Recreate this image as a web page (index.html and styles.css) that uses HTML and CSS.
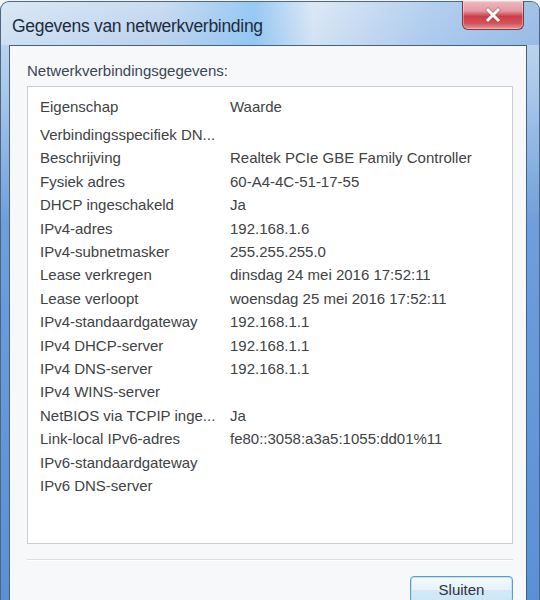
FILE: index.html
```html
<!DOCTYPE html>
<html lang="nl">
<head>
    <meta charset="UTF-8">
    <title>Gegevens van netwerkverbinding</title>
    <link rel="stylesheet" href="styles.css">
</head>
<body>
    <div class="window">
        <!-- Title bar -->
        <div class="titlebar">
            <span class="title">Gegevens van netwerkverbinding</span>
            <button class="close" aria-label="Sluiten">
                <svg width="18" height="16" viewBox="0 0 18 16">
                    <path d="M4 3 L14 13 M14 3 L4 13" stroke="#8a3038" stroke-width="4.2" stroke-linecap="square" opacity="0.45"/>
                    <path d="M4 3 L14 13 M14 3 L4 13" stroke="#fff" stroke-width="3" stroke-linecap="square"/>
                </svg>
            </button>
        </div>

        <div class="client">
            <p class="label">Netwerkverbindingsgegevens:</p>
            <div class="listbox">
                <div class="row header">
                    <span>Eigenschap</span>
                    <span>Waarde</span>
                </div>
                <div class="row"><span>Verbindingsspecifiek DN...</span><span></span></div>
                <div class="row"><span>Beschrijving</span><span>Realtek PCIe GBE Family Controller</span></div>
                <div class="row"><span>Fysiek adres</span><span>60-A4-4C-51-17-55</span></div>
                <div class="row"><span>DHCP ingeschakeld</span><span>Ja</span></div>
                <div class="row"><span>IPv4-adres</span><span>192.168.1.6</span></div>
                <div class="row"><span>IPv4-subnetmasker</span><span>255.255.255.0</span></div>
                <div class="row"><span>Lease verkregen</span><span>dinsdag 24 mei 2016 17:52:11</span></div>
                <div class="row"><span>Lease verloopt</span><span>woensdag 25 mei 2016 17:52:11</span></div>
                <div class="row"><span>IPv4-standaardgateway</span><span>192.168.1.1</span></div>
                <div class="row"><span>IPv4 DHCP-server</span><span>192.168.1.1</span></div>
                <div class="row"><span>IPv4 DNS-server</span><span>192.168.1.1</span></div>
                <div class="row"><span>IPv4 WINS-server</span><span></span></div>
                <div class="row"><span>NetBIOS via TCPIP inge...</span><span>Ja</span></div>
                <div class="row"><span>Link-local IPv6-adres</span><span>fe80::3058:a3a5:1055:dd01%11</span></div>
                <div class="row"><span>IPv6-standaardgateway</span><span></span></div>
                <div class="row"><span>IPv6 DNS-server</span><span></span></div>
            </div>
            <div class="separator"></div>
            <div class="buttons">
                <button class="btn">Sluiten</button>
            </div>
        </div>
    </div>
</body>
</html>
```

FILE: styles.css
```css
body {
    margin: 0;
    background: #f4f4f4;
    font-family: "Liberation Sans", Arial, sans-serif;
    overflow: hidden;
}
.window {
    box-sizing: border-box;
    width: 540px;
    height: 602px;
    margin-top: 1px;
    border: 1px solid #4f6580;
    border-bottom: none;
    border-radius: 9px 9px 0 0;
    background: linear-gradient(to bottom, #cadcf1 0, #a9c7ea 90px, #6e9fdc 220px, #5a90d6 600px);
    padding: 0 12px 0 8px;
    display: flex;
    flex-direction: column;
}
.titlebar {
    height: 45px;
    display: flex;
    justify-content: space-between;
    align-items: flex-start;
    margin: 0 -12px 0 -8px;
    padding: 0 15px 0 11px;
    border-radius: 9px 9px 0 0;
    background: linear-gradient(to right, rgba(255,255,255,0.3) 0, rgba(255,255,255,0) 30%, rgba(120,190,245,0.6) 47%, rgba(255,255,255,0.35) 58%, rgba(140,185,235,0.35) 80%, rgba(110,160,220,0.45) 100%);
}
.title {
    margin-top: 14px;
    font-size: 17.5px;
    letter-spacing: -0.3px;
    color: #1e2c3e;
}
.close {
    width: 62px;
    height: 29px;
    margin-top: -1px;
    border: 1px solid #7a3a44;
    border-top: none;
    border-radius: 0 0 6px 6px;
    background: linear-gradient(to bottom, #eeb9c0 0, #e49aa3 35%, #cc3d48 55%, #d6535c 80%, #e8959b 100%);
    display: flex;
    align-items: center;
    justify-content: center;
    padding: 0;
    box-shadow: inset 0 0 0 1px rgba(255,255,255,0.35);
}
.client {
    flex: 1;
    background: #f7f8f9;
    border: 1px solid #46607f;
    border-bottom: none;
    padding: 15px 13px 0 17px;
    display: flex;
    flex-direction: column;
}
.label {
    margin: 0;
    font-size: 15px;
    line-height: 20px;
    color: #3a4656;
}
.listbox {
    margin-top: 5px;
    height: 456px;
    background: #fff;
    border: 1px solid #c9ced4;
    color: #404244;
    font-size: 15px;
}
.row {
    display: grid;
    grid-template-columns: 190px 1fr;
    padding-left: 12px;
    line-height: 23.4px;
    white-space: nowrap;
}
.row.header {
    padding-top: 8px;
    padding-bottom: 4px;
    line-height: 24px;
}
.separator {
    margin-top: 15px;
    border-top: 1px solid #dcdfe2;
    border-bottom: 1px solid #fff;
}
.buttons {
    display: flex;
    justify-content: flex-end;
    padding-top: 15px;
}
.btn {
    width: 103px;
    height: 27px;
    border: 1px solid #5f9cc4;
    border-radius: 4px;
    background: linear-gradient(to bottom, #f4fafd 0, #e6f3fb 50%, #d3eaf8 51%, #cde6f6 100%);
    box-shadow: inset 0 0 0 1px #bfe4f7;
    font-family: "Liberation Sans", Arial, sans-serif;
    font-size: 15px;
    color: #2e3338;
    padding: 0;
}
```
